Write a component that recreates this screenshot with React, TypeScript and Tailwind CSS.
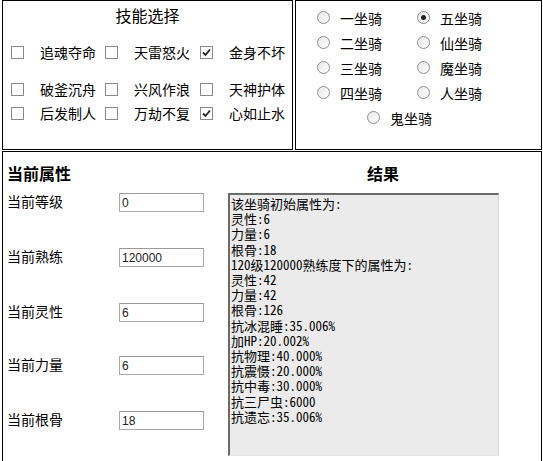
import { useState } from 'react';

const skills = [
  ['追魂夺命', false],
  ['天雷怒火', false],
  ['金身不坏', true],
  ['破釜沉舟', false],
  ['兴风作浪', false],
  ['天神护体', false],
  ['后发制人', false],
  ['万劫不复', false],
  ['心如止水', true],
] as const;

const mounts = ['一坐骑', '五坐骑', '二坐骑', '仙坐骑', '三坐骑', '魔坐骑', '四坐骑', '人坐骑'];

const attrs = [
  { label: '当前等级', value: '0', gap: '' },
  { label: '当前熟练', value: '120000', gap: 'mt-[36px]' },
  { label: '当前灵性', value: '6', gap: 'mt-[36px]' },
  { label: '当前力量', value: '6', gap: 'mt-[34px]' },
  { label: '当前根骨', value: '18', gap: 'mt-[36px]' },
];

const result = [
  '该坐骑初始属性为:',
  '灵性:6',
  '力量:6',
  '根骨:18',
  '120级120000熟练度下的属性为:',
  '灵性:42',
  '力量:42',
  '根骨:126',
  '抗冰混睡:35.006%',
  '加HP:20.002%',
  '抗物理:40.000%',
  '抗震慑:20.000%',
  '抗中毒:30.000%',
  '抗三尸虫:6000',
  '抗遗忘:35.006%',
].join('\n');

function Check({ checked }: { checked: boolean }) {
  return (
    <span className="w-[13px] h-[13px] shrink-0 border border-[#8a8a8a] bg-white flex items-center justify-center">
      {checked && (
        <svg width="9" height="9" viewBox="0 0 9 9">
          <path d="M1 4.5 L3.5 7 L8 1.5" fill="none" stroke="#222" strokeWidth="1.8" />
        </svg>
      )}
    </span>
  );
}

function Radio({ on }: { on: boolean }) {
  return (
    <span className="w-[13px] h-[13px] shrink-0 rounded-full border border-[#8e8e8e] bg-gradient-to-br from-[#e8e8e8] to-white flex items-center justify-center">
      {on && <span className="w-[5px] h-[5px] rounded-full bg-[#222]" />}
    </span>
  );
}

export default function App() {
  const [mount, setMount] = useState('五坐骑');

  return (
    <div className="w-[543px] h-[461px] overflow-hidden bg-white pl-[2px] text-black font-['Noto_Sans_CJK_SC',sans-serif]">
      <div className="flex gap-[2px]">
        {/* 技能选择 */}
        <div className="w-[291px] h-[150px] border border-black">
          <div className="pt-[4px] text-center text-[16px] leading-[20px]">技能选择</div>
          <div className="mt-[15px] pl-[8px] grid grid-cols-[94px_95px_auto]">
            {skills.map(([name, checked], i) => (
              <div
                key={name}
                className={`h-[24px] flex items-center ${i >= 3 && i < 6 ? 'mt-[13px]' : ''}`}
              >
                <Check checked={checked} />
                <span className="ml-[16px] text-[14px] leading-[20px]">{name}</span>
              </div>
            ))}
          </div>
        </div>

        {/* 坐骑 */}
        <div className="w-[247px] h-[150px] border border-black pt-[4px] pl-[21px]">
          <div className="w-fit grid grid-cols-[100px_auto]">
            {mounts.map((m) => (
              <div key={m} className="h-[25px] flex items-center cursor-pointer" onClick={() => setMount(m)}>
                <Radio on={mount === m} />
                <span className="ml-[10px] text-[14px] leading-[20px]">{m}</span>
              </div>
            ))}
            <div className="col-span-2 h-[25px] flex items-center justify-center cursor-pointer" onClick={() => setMount('鬼坐骑')}>
              <Radio on={mount === '鬼坐骑'} />
              <span className="ml-[10px] text-[14px] leading-[20px]">鬼坐骑</span>
            </div>
          </div>
        </div>
      </div>

      {/* 属性 / 结果 */}
      <div className="mt-[1px] w-[540px] h-[320px] border border-black grid grid-cols-[222px_1fr] pt-[11px]">
        <div className="pl-[4px]">
          <div className="text-[16px] leading-[20px] font-bold">当前属性</div>
          <div className="mt-[10px] flex flex-col">
            {attrs.map((a) => (
              <div key={a.label} className={`h-[19px] flex items-center ${a.gap}`}>
                <span className="w-[112px] mb-[4px] text-[14px] leading-[20px]">{a.label}</span>
                <input
                  defaultValue={a.value}
                  className="w-[85px] h-[19px] border border-[#a9a9a9] border-t-[#9a9a9a] px-[2px] text-[12px] text-[#222] font-['Liberation_Sans',sans-serif] outline-none"
                />
              </div>
            ))}
          </div>
        </div>
        <div>
          <div className="text-center text-[16px] leading-[20px] font-bold">结果</div>
          <textarea
            readOnly
            value={result}
            className="block mt-[10px] ml-[3px] w-[271px] h-[263px] resize-none overflow-hidden bg-[#ebebeb] border-l-2 border-t-2 border-r border-b border-l-[#6b6b6b] border-t-[#6b6b6b] border-r-[#d8d8d8] border-b-[#e6e6e6] pl-[1px] pt-[1px] text-[13px] leading-[15.2px] text-black font-['Noto_Sans_Mono_CJK_SC','Noto_Sans_CJK_SC',monospace] outline-none"
          />
        </div>
      </div>
    </div>
  );
}
